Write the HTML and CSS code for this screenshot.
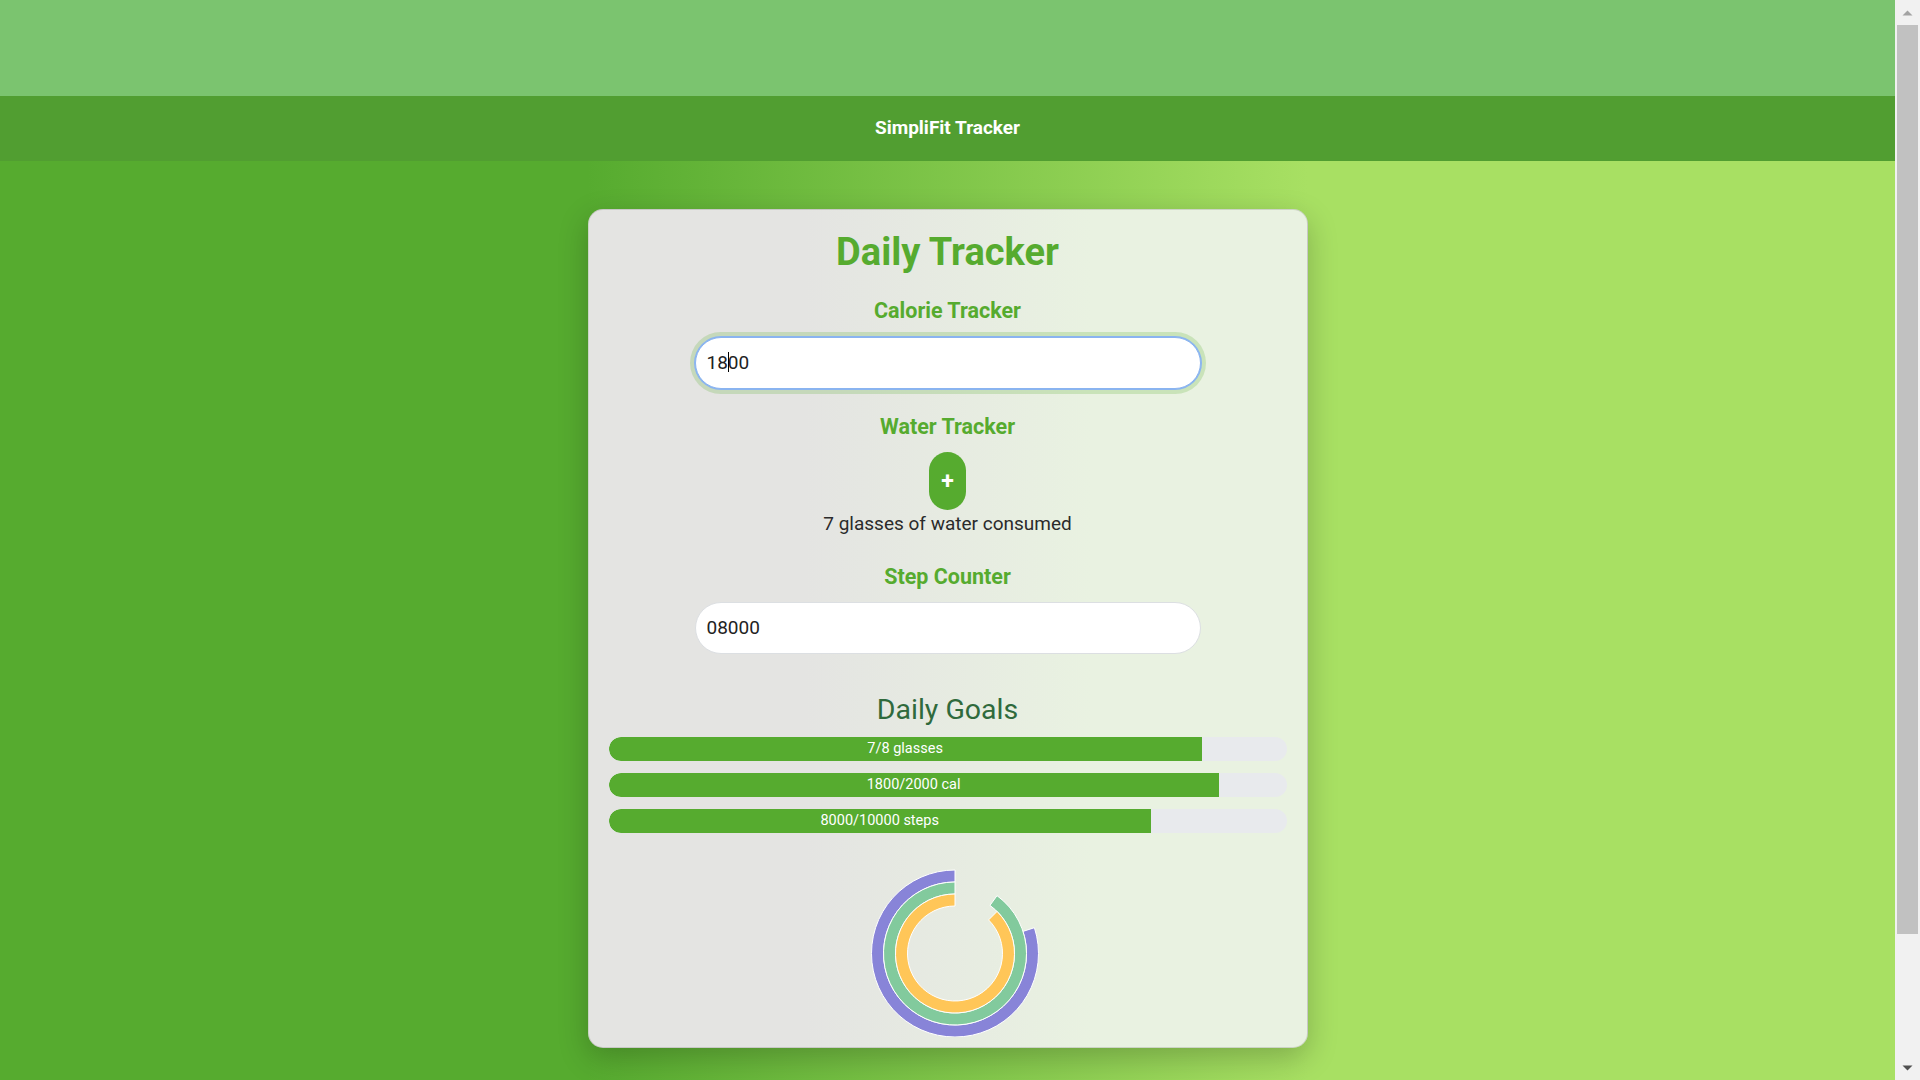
FILE: index.html
```html
<!DOCTYPE html>
<html lang="en">
<head>
<meta charset="utf-8">
<title>SimpliFit Tracker</title>
<link rel="stylesheet" href="styles.css">
</head>
<body>
<div class="viewport">
<div class="topband"></div>
<header class="appbar"><span class="brand">SimpliFit Tracker</span></header>
<main class="page">
  <section class="card">
    <h1 class="title">Daily Tracker</h1>

    <h3 class="section-title calorie-title">Calorie Tracker</h3>
    <div class="field-wrap">
      <input class="field field-focused" id="calories" type="text" value="1800">
      <span class="caret"></span>
    </div>

    <h3 class="section-title water-title">Water Tracker</h3>
    <button class="add-btn" type="button">+</button>
    <p class="water-count">7 glasses of water consumed</p>

    <h3 class="section-title steps-title">Step Counter</h3>
    <input class="field steps-field" type="text" value="08000">

    <h2 class="goals-title">Daily Goals</h2>
    <div class="goals">
      <div class="bar"><div class="fill" style="width:87.5%">7/8 glasses</div></div>
      <div class="bar"><div class="fill" style="width:90%">1800/2000 cal</div></div>
      <div class="bar"><div class="fill" style="width:80%">8000/10000 steps</div></div>
    </div>

    <svg class="chart" width="680" height="184" viewBox="0 0 680 184">
      <path class="ring ring-steps" d="M 346 17 A 83.5 83.5 0 1 0 425.41 74.70 L 414.00 78.40 A 71.5 71.5 0 1 1 346 29 Z"/>
      <path class="ring ring-cal" d="M 346 29 A 71.5 71.5 0 1 0 388.03 42.65 L 380.97 52.36 A 59.5 59.5 0 1 1 346 41 Z"/>
      <path class="ring ring-water" d="M 346 41 A 59.5 59.5 0 1 0 388.07 58.43 L 379.59 66.91 A 47.5 47.5 0 1 1 346 53 Z"/>
    </svg>
  </section>
</main>
</div>
<aside class="scrollbar" aria-hidden="true">
  <div class="sb-btn">
    <svg width="11" height="6" viewBox="0 0 11 6"><path d="M0.5 5.5 L5.5 0.5 L10.5 5.5 Z" fill="#a3a3a3"/></svg>
  </div>
  <div class="sb-track"><div class="sb-thumb"></div></div>
  <div class="sb-btn">
    <svg width="11" height="6" viewBox="0 0 11 6"><path d="M0.5 0.5 L5.5 5.5 L10.5 0.5 Z" fill="#505050"/></svg>
  </div>
</aside>
</body>
</html>
```
FILE: styles.css
```css
html, body {
  margin: 0;
  padding: 0;
  height: 100%;
  overflow: hidden;
}

body {
  font-family: Roboto, "Liberation Sans", Arial, sans-serif;
  color: #333;
  display: flex;
}

.viewport {
  flex: 1;
  min-width: 0;
  height: 100vh;
  overflow-y: auto;
  background: linear-gradient(to right, #56ab2f 31%, #a8e063 69%);
}

.scrollbar {
  width: 25px;
  height: 100vh;
  flex: none;
  background: #f1f1f1;
  display: flex;
  flex-direction: column;
}

.sb-btn {
  height: 25px;
  display: flex;
  align-items: center;
  justify-content: center;
}

.sb-btn svg {
  display: block;
}

.sb-track {
  flex: 1;
  padding: 0 2px;
}

.sb-thumb {
  height: 909px;
  background: #c1c1c1;
}

.topband {
  height: 96px;
  background: #7bc46f;
}

.appbar {
  height: 65px;
  background: #519e31;
  display: flex;
  align-items: center;
  justify-content: center;
}

.brand {
  color: #fff;
  font-weight: 700;
  font-size: 19px;
  line-height: 20px;
  margin-top: -2px;
}

.page {
  padding: 48px 0 176px;
}

.card {
  width: 720px;
  box-sizing: border-box;
  margin: 0 auto;
  padding: 20px 20px 10px;
  border: 1px solid rgba(0, 0, 0, 0.12);
  border-radius: 15px;
  background: linear-gradient(to right, #e4e4e2 30%, #e9f2e1 70%);
  box-shadow: 0 10px 30px rgba(0, 0, 0, 0.22);
  display: flex;
  flex-direction: column;
  align-items: center;
}

.title {
  margin: 0;
  font-size: 38px;
  line-height: 44px;
  font-weight: 700;
  color: #56ab2f;
}

.section-title {
  margin: 0;
  font-size: 21.5px;
  line-height: 25px;
  font-weight: 700;
  color: #56ab2f;
}

.calorie-title { margin-top: 24px; }
.water-title { margin-top: 25px; }
.steps-title { margin-top: 29px; }

.field-wrap {
  position: relative;
  margin-top: 14px;
}

.field {
  display: block;
  width: 506px;
  height: 52px;
  box-sizing: border-box;
  padding: 0 11px 2px;
  border: 1px solid #dcdfe2;
  border-radius: 26px;
  background: #fff;
  font-family: Roboto, "Liberation Sans", Arial, sans-serif;
  font-size: 19px;
  color: #222;
  outline: none;
}

.field-focused {
  border-color: #8ab4f0;
  box-shadow: 0 0 0 1px #8ab4f0, 0 0 0 5px rgba(86, 171, 47, 0.22);
}

.caret {
  position: absolute;
  left: 33px;
  top: 15px;
  width: 1px;
  height: 20px;
  background: #000;
}

.steps-field { margin-top: 13px; }

.add-btn {
  margin-top: 13px;
  width: 37px;
  height: 58px;
  padding: 0;
  border: none;
  border-radius: 19px;
  background: #56ab2f;
  color: #fff;
  font-family: Roboto, "Liberation Sans", Arial, sans-serif;
  font-weight: 700;
  font-size: 23px;
  line-height: 1;
  display: flex;
  align-items: center;
  justify-content: center;
}

.water-count {
  margin: 3px 0 0;
  font-size: 19px;
  line-height: 22px;
  color: #2b2b2b;
}

.goals-title {
  margin: 39px 0 0;
  font-size: 28.5px;
  line-height: 33px;
  font-weight: 400;
  color: #2f6a3c;
}

.goals {
  margin-top: 11px;
  align-self: stretch;
  display: flex;
  flex-direction: column;
  gap: 12px;
}

.bar {
  height: 24px;
  border-radius: 12px;
  background: #e8eaed;
  overflow: hidden;
}

.fill {
  height: 100%;
  background: #56ab2f;
  border-radius: 12px 0 0 12px;
  color: #fff;
  font-size: 14.5px;
  line-height: 24px;
  text-align: center;
  white-space: nowrap;
}

.chart {
  margin-top: 20px;
  display: block;
  align-self: stretch;
}

.ring {
  stroke: #fff;
  stroke-width: 1;
}
.ring-steps { fill: #8884d8; }
.ring-cal { fill: #82ca9d; }
.ring-water { fill: #ffc658; }
```
